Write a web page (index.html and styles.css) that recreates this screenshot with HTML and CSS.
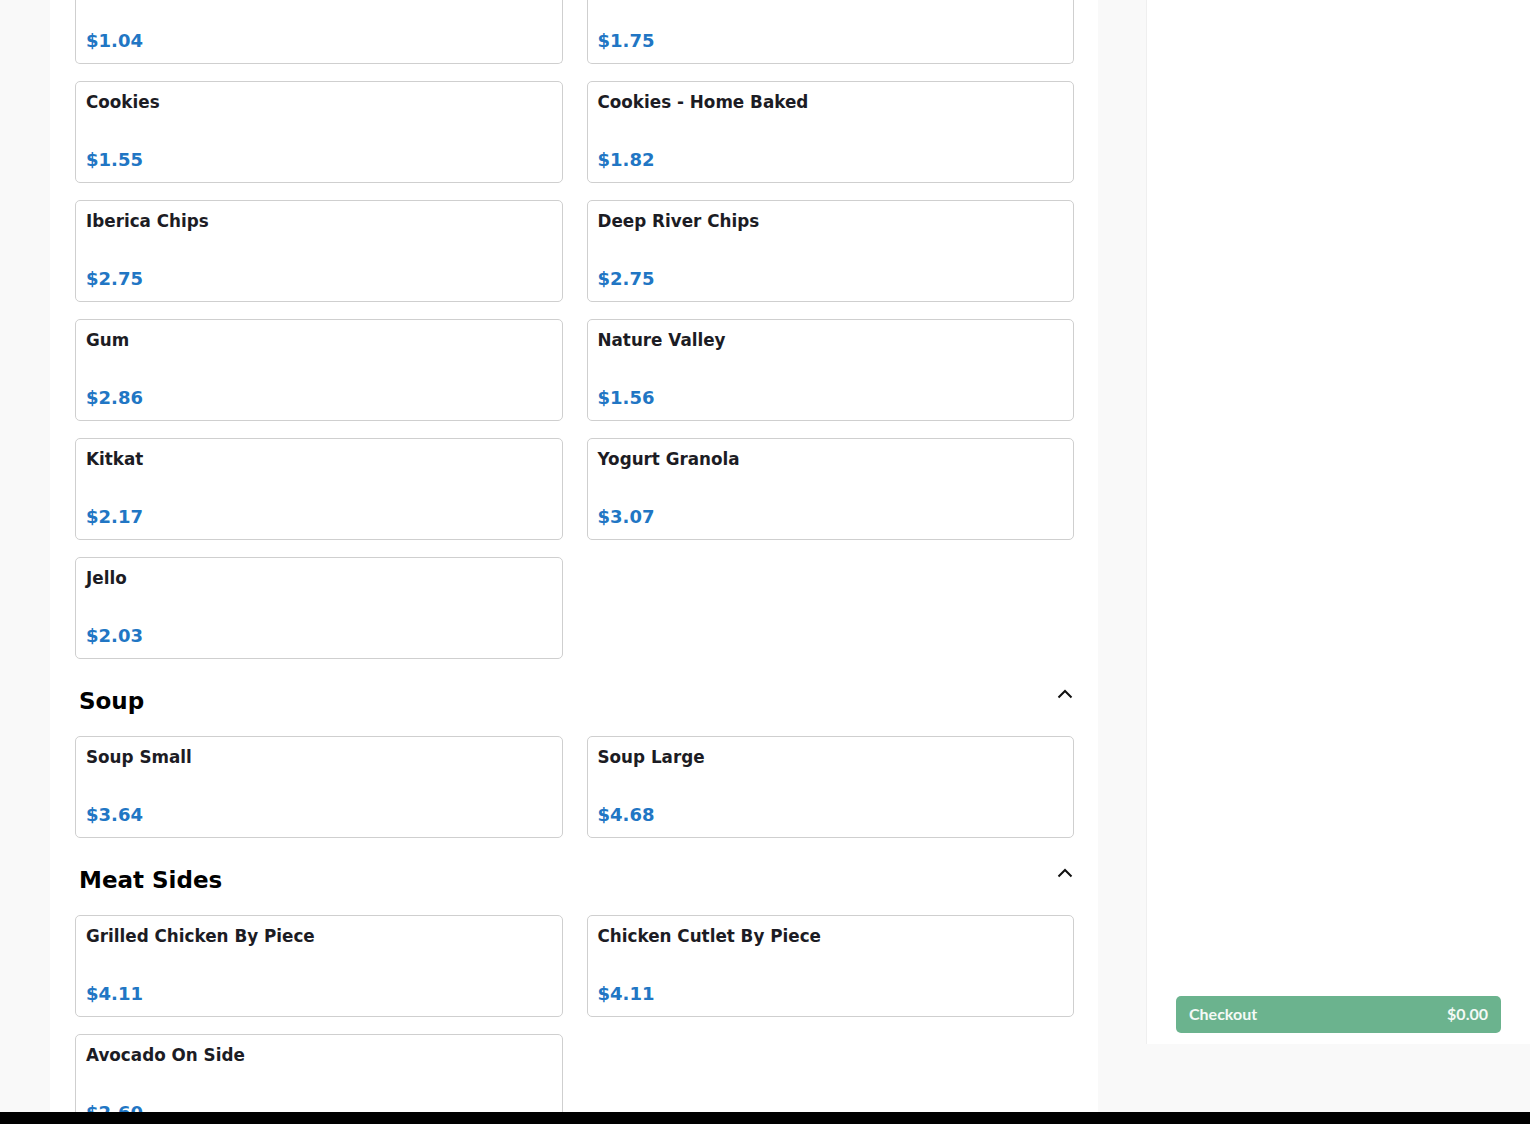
FILE: index.html
```html
<!DOCTYPE html>
<html>
<head>
<meta charset="utf-8">
<link rel="stylesheet" href="styles.css">
</head>
<body>
<div class="page">
  <main class="menu">
    <div class="grid">
      <div class="card clipped"><div class="price">$1.04</div></div>
      <div class="card clipped"><div class="price">$1.75</div></div>
      <div class="card"><div class="name">Cookies</div><div class="price">$1.55</div></div>
      <div class="card"><div class="name">Cookies - Home Baked</div><div class="price">$1.82</div></div>
      <div class="card"><div class="name">Iberica Chips</div><div class="price">$2.75</div></div>
      <div class="card"><div class="name">Deep River Chips</div><div class="price">$2.75</div></div>
      <div class="card"><div class="name">Gum</div><div class="price">$2.86</div></div>
      <div class="card"><div class="name">Nature Valley</div><div class="price">$1.56</div></div>
      <div class="card"><div class="name">Kitkat</div><div class="price">$2.17</div></div>
      <div class="card"><div class="name">Yogurt Granola</div><div class="price">$3.07</div></div>
      <div class="card"><div class="name">Jello</div><div class="price">$2.03</div></div>
    </div>

    <div class="section-head">
      <h2>Soup</h2>
      <svg class="chev" width="16" height="10" viewBox="0 0 16 10"><path d="M1.5 8.5 L8 2 L14.5 8.5" fill="none" stroke="#111" stroke-width="2"/></svg>
    </div>
    <div class="grid">
      <div class="card"><div class="name">Soup Small</div><div class="price">$3.64</div></div>
      <div class="card"><div class="name">Soup Large</div><div class="price">$4.68</div></div>
    </div>

    <div class="section-head">
      <h2>Meat Sides</h2>
      <svg class="chev" width="16" height="10" viewBox="0 0 16 10"><path d="M1.5 8.5 L8 2 L14.5 8.5" fill="none" stroke="#111" stroke-width="2"/></svg>
    </div>
    <div class="grid">
      <div class="card"><div class="name">Grilled Chicken By Piece</div><div class="price">$4.11</div></div>
      <div class="card"><div class="name">Chicken Cutlet By Piece</div><div class="price">$4.11</div></div>
      <div class="card"><div class="name">Avocado On Side</div><div class="price">$2.60</div></div>
    </div>
  </main>

  <aside class="cart">
    <button class="checkout"><span>Checkout</span><span>$0.00</span></button>
  </aside>
</div>
<div class="bottom-bar"></div>
</body>
</html>
```

FILE: styles.css
```css
html, body {
  margin: 0;
  padding: 0;
  height: 1124px;
  overflow: hidden;
  background: #f9f9f9;
}

.page {
  display: flex;
  align-items: flex-start;
}

.menu {
  margin-left: 50px;
  width: 999px;
  padding: 0 24px 40px 25px;
  background: #fff;
  font-family: "DejaVu Sans", sans-serif;
}

.grid {
  display: grid;
  grid-template-columns: 1fr 1fr;
  column-gap: 24px;
  row-gap: 17px;
}

.card {
  box-sizing: border-box;
  height: 102px;
  border: 1px solid #cfcfcf;
  border-radius: 5px;
  padding: 10px 10px 12px;
  display: flex;
  flex-direction: column;
  justify-content: space-between;
}

.card.clipped {
  height: 64px;
  border-top: none;
  border-top-left-radius: 0;
  border-top-right-radius: 0;
  justify-content: flex-end;
}

.name {
  font-size: 16.8px;
  line-height: 20px;
  font-weight: bold;
  color: #1c1c24;
}

.price {
  font-size: 18px;
  font-weight: bold;
  color: #2176c4;
}

.section-head {
  display: flex;
  justify-content: space-between;
  align-items: center;
  padding: 29px 0 21px 4px;
}

.section-head h2 {
  margin: 0;
  font-size: 23px;
  font-weight: bold;
  color: #000;
  line-height: 27px;
}

.chev {
  margin-right: 1px;
  margin-bottom: 16px;
}

.cart {
  box-sizing: border-box;
  margin-left: 48px;
  width: 384px;
  height: 1044px;
  background: #fff;
  border-left: 1px solid #efefef;
  display: flex;
  flex-direction: column;
  justify-content: flex-end;
  padding: 0 29px 11px 29px;
}

.checkout {
  height: 37px;
  border: none;
  border-radius: 5px;
  background: #6bb38e;
  color: #f4faf6;
  font-family: "Lato", "Open Sans", sans-serif;
  font-weight: bold;
  font-size: 16px;
  display: flex;
  justify-content: space-between;
  align-items: center;
  padding: 0 13px 2px;
}

.bottom-bar {
  position: fixed;
  left: 0;
  right: 0;
  bottom: 0;
  height: 12px;
  background: #000;
}
```
